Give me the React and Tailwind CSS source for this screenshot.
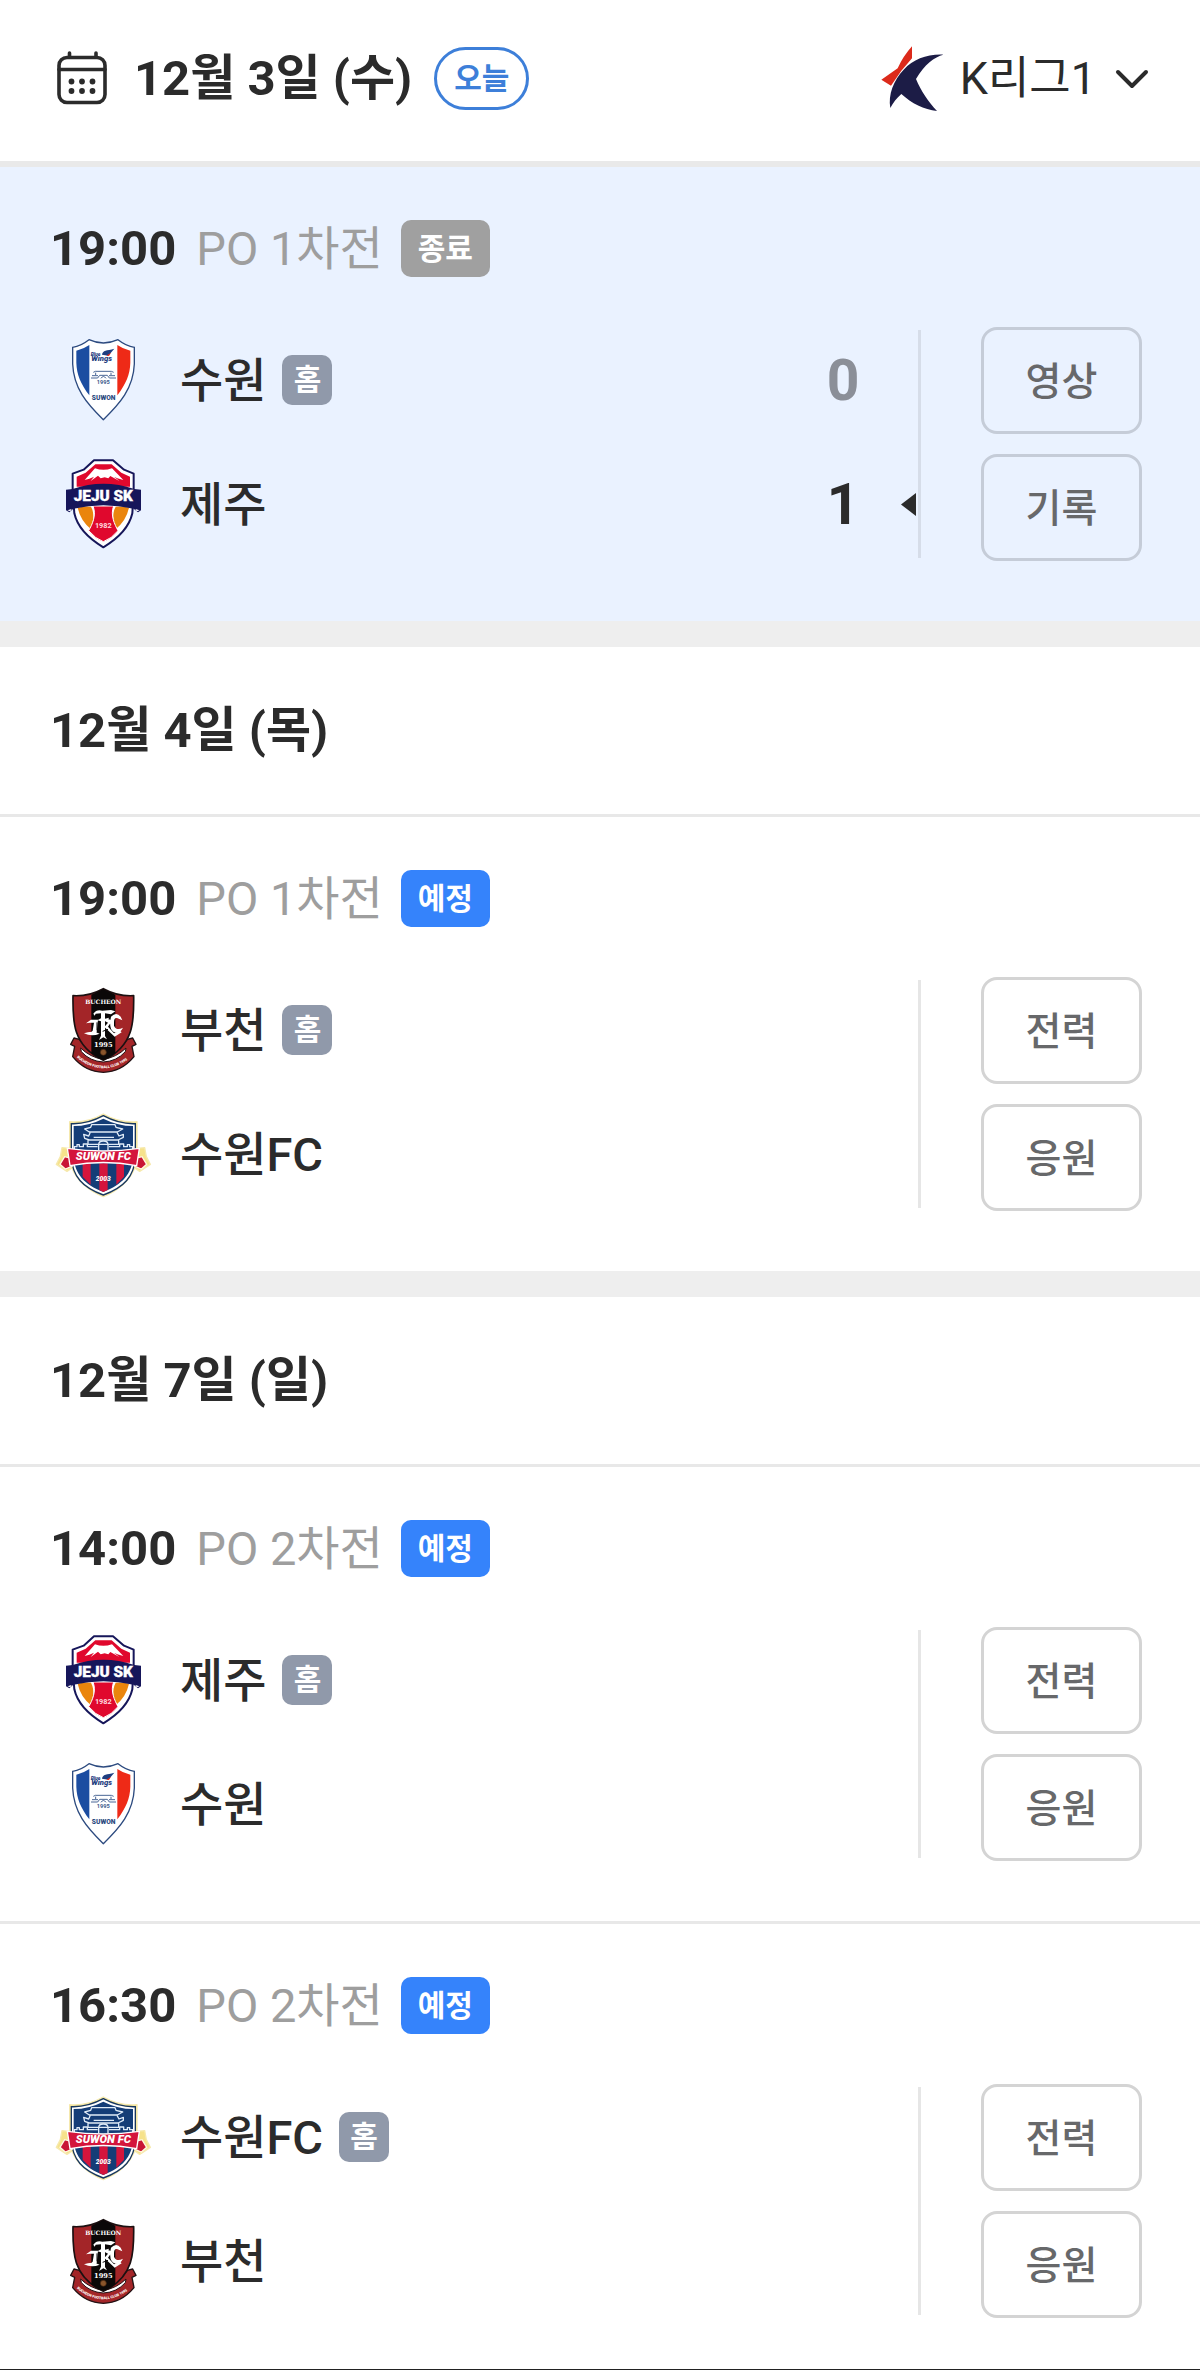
import { useState } from "react";

function CalendarIcon() {
    return (
        <svg width="52" height="56" viewBox="0 0 52 56" fill="none" stroke="#2b2b2b" strokeWidth="3.6" strokeLinecap="round" aria-hidden="true">
            <rect x="3" y="6.5" width="46" height="45" rx="8" />
            <path d="M3 18.5H49M13.5 2V6M40 2V6" />
            <g fill="#2b2b2b" stroke="none">
                <circle cx="15.5" cy="30.5" r="2.9" />
                <circle cx="26" cy="30.5" r="2.9" />
                <circle cx="36.5" cy="30.5" r="2.9" />
                <circle cx="15.5" cy="40" r="2.9" />
                <circle cx="26" cy="40" r="2.9" />
                <circle cx="36.5" cy="40" r="2.9" />
            </g>
        </svg>
    );
}

function LeagueLogo() {
    return (
        <svg width="63" height="68" viewBox="254 130 189 204" aria-hidden="true">
            <path d="M347 134V170L315 207L284 252L255 234L304 200Q320 164 347 134Z" fill="#dc2a1b" />
            <path d="M441 159C415 166 384 188 359 232C374 268 396 300 422 328C383 324 346 305 315 277C301 290 290 303 282 319C275 279 292 235 322 204C352 173 392 157 441 159Z" fill="#1c1c46" />
        </svg>
    );
}

function SuwonLogo() {
    return (
        <svg className="size-24" viewBox="45 36 288 288" aria-hidden="true">
            <path d="M98 82C117 79 133 70 147 59Q190 79 234 59C248 70 264 79 283 82V132C280 205 240 250 190 299C140 250 101 205 98 132Z" fill="#fff" stroke="#2c4a7f" strokeWidth="4" />
            <path d="M109 92Q131 87 148 75V226C122 191 110 164 109 128Z" fill="#1c4da1" />
            <path d="M271 92Q249 87 232 75V226C258 191 270 164 271 128Z" fill="#ee2a17" />
            <path d="M186 104C188 90 200 92 223 86L205 107Z" fill="#1f3e80" />
            <path d="M199 107L213 98L207 108Z" fill="#ee2a17" />
            <text x="152" y="107" fontSize="15" className="font-[Roboto] font-black italic" fill="#1f3e80">Blue</text>
            <text x="154" y="123" fontSize="23" className="font-[Roboto] font-black italic" fill="#1f3e80">Wings</text>
            <path d="M160 157L166 154H214L221 157M167 158V165M213 158V165M153 174H173L179 166H202L208 174H228M156 167H174M207 167H225M183 175Q190 164 198 175" fill="none" stroke="#4a6796" strokeWidth="3" />
            <text x="190" y="192" fontSize="17" textAnchor="middle" className="font-[Roboto] font-bold" fill="#3d5a8c">1995</text>
            <text x="191" y="239" fontSize="20" textAnchor="middle" className="font-[Roboto] font-black" fill="#2b4a80">SUWON</text>
        </svg>
    );
}

function JejuLogo() {
    return (
        <svg className="size-24" viewBox="45 408 288 288" aria-hidden="true">
            <path d="M162 421H219L252 449L281 461V515L277 580C267 625 235 655 190 682C145 655 113 625 103 580L98 515V461L131 449Z" fill="#fff" stroke="#16165a" strokeWidth="6" strokeLinejoin="round" />
            <path d="M166 433H215L244 458L270 470V500H110V470L137 458Z" fill="#e0082d" />
            <path d="M134 480L165 445Q190 454 216 445L250 480L232 475L222 470L238 483L211 468L205 475L194 472L182 475L174 467L152 483L162 470L148 476Z" fill="#fff" />
            <path d="M113 563Q134 558 153 560C166 584 158 608 153 628Q121 601 113 563Z" fill="#ea850d" />
            <path d="M267 563Q246 558 227 560C214 584 222 608 227 628Q259 601 267 563Z" fill="#ea850d" />
            <path d="M159 558H221C210 585 224 613 234 632Q215 656 190 665Q166 656 146 632C157 613 170 585 159 558Z" fill="#e0082d" stroke="#fff" strokeWidth="3" />
            <path d="M78 509L98 507Q190 475 283 507L303 509V571L294 577L281 566Q190 545 100 566L88 577L78 571Z" fill="#16165a" />
            <path d="M82 571L95 567L91 574ZM299 571L286 567L290 574Z" fill="#fff" />
            <text x="190" y="543" fontSize="46" textAnchor="middle" className="font-[Roboto] font-black" fill="#fff" stroke="#fff" strokeWidth="1">JEJU SK</text>
            <text x="190" y="623" fontSize="22" textAnchor="middle" className="font-[Roboto] font-bold" fill="#ffd9df">1982</text>
        </svg>
    );
}

function BucheonLogo() {
    return (
        <svg className="size-24" viewBox="45 36 288 288" aria-hidden="true">
            <path d="M102 204L92 223L104 229L98 260Q136 306 190 307Q244 306 282 260L276 229L288 223L278 204L262 208Q190 300 118 208Z" fill="#a32528" stroke="#231214" strokeWidth="4" strokeLinejoin="round" />
            <path d="M122 234Q150 262 190 268Q230 262 258 234L256 245Q230 274 190 276Q150 274 124 245Z" fill="#fff" stroke="#231214" strokeWidth="3" />
            <path d="M190 56Q235 80 281 77C282 150 284 228 190 271C96 228 98 150 99 77Q145 80 190 56Z" fill="#a32528" stroke="#1b1011" strokeWidth="5" strokeLinejoin="round" />
            <path d="M154 74L190 57L226 74V250Q210 263 190 270Q170 263 154 250Z" fill="#0b0808" />
            <text x="190" y="103" fontSize="18" textAnchor="middle" className="font-['DejaVu_Serif'] font-bold" fill="#fff">BUCHEON</text>
            <g fill="#fff">
                <path d="M160 131Q170 117 187 122L213 120L226 124L213 133L195 130V146L207 143L203 153H195V198L201 208L190 202L177 210L183 197V154L172 151L183 145V130L167 131L164 137Z" />
                <path d="M138 160L153 149H174L170 187Q156 196 134 190Q153 188 158 182L162 158H149ZM193 152Q209 143 215 154L204 170L222 190L240 182L245 187L224 200L193 171L204 158ZM213 140Q229 124 242 140L247 151L231 144Q222 142 222 157V167Q229 184 249 173Q238 195 220 185Q208 176 211 152ZM132 190Q157 180 179 191Q155 201 132 190Z" />
            </g>
            <path d="M171 157V181M204 178L188 184" stroke="#0b0808" strokeWidth="3" />
            <text x="190" y="231" fontSize="20" textAnchor="middle" className="font-['DejaVu_Serif'] font-bold" fill="#fff">1995</text>
            <circle cx="190" cy="247" r="9" fill="#8a552b" stroke="#40230f" strokeWidth="2" />
            <path id="bucheon-ribbon" d="M110 262Q145 293 190 295Q235 293 272 262" fill="none" />
            <text fontSize="11" className="font-[Roboto] font-black" fill="#fff">
                <textPath href="#bucheon-ribbon">BUCHEON FOOTBALL CLUB 1995</textPath>
            </text>
        </svg>
    );
}

function SuwonFcLogo() {
    return (
        <svg className="size-24" viewBox="45 408 288 288" aria-hidden="true">
            <path d="M190 432Q240 460 291 455V535L314 533L319 560L331 583L299 604L284 594Q262 650 190 680Q118 650 96 594L81 604L49 583L61 560L66 533L89 535V455Q140 460 190 432Z" fill="#f6e28b" stroke="#f6e9ad" strokeWidth="4" strokeLinejoin="round" />
            <path d="M190 437Q238 463 286 461V560C283 620 252 652 190 675C128 652 97 620 94 560V461Q142 463 190 437Z" fill="#fff" stroke="#17375f" strokeWidth="4" />
            <path d="M190 446Q234 468 279 468V560C276 612 247 643 190 666C133 643 104 612 101 560V468Q146 468 190 446Z" fill="#143d77" />
            <path d="M128 580H152V644L128 620ZM178 580H203V660L190 666L178 660ZM229 580H252V620L229 644Z" fill="#d4153c" />
            <g fill="none" stroke="#dfebf7" strokeWidth="4" strokeLinejoin="round">
                <path d="M155 464H225L228 472L248 477L232 486H148L134 477L152 472Z" />
                <path d="M151 487L146 498L131 493L134 505L148 510H234L250 502V493L237 498L231 487M161 502H222M144 511V523H236V511" />
                <path d="M103 541V530H111V524H118V530H130V522H142V530H173M207 530H239V522H251V530H262V524H269V530H278V541M176 540V524Q176 513 190 513Q204 513 204 524V540" />
            </g>
            <path d="M60 583L74 560L94 565L97 588L76 597ZM320 583L306 560L286 565L283 588L304 597Z" fill="#c91534" stroke="#fff8e2" strokeWidth="4" />
            <path d="M82 535Q190 551 298 535L290 587Q190 568 90 587Z" fill="#d4153c" stroke="#fff" strokeWidth="4" />
            <text x="190" y="570" fontSize="34" textAnchor="middle" className="font-[Roboto] font-black italic" fill="#fff">SUWON FC</text>
            <text x="190" y="634" fontSize="20" textAnchor="middle" className="font-[Roboto] font-black italic" fill="#fff">2003</text>
        </svg>
    );
}

const TEAMS = {
    suwon: { name: "수원", Logo: SuwonLogo },
    jeju: { name: "제주", Logo: JejuLogo },
    bucheon: { name: "부천", Logo: BucheonLogo },
    suwonFc: { name: "수원FC", Logo: SuwonFcLogo },
};

const days = [
    {
        date: "12월 3일 (수)",
        matches: [
            { time: "19:00", round: "PO 1차전", done: true, home: "suwon", away: "jeju", score: [0, 1] },
        ],
    },
    {
        date: "12월 4일 (목)",
        matches: [{ time: "19:00", round: "PO 1차전", home: "bucheon", away: "suwonFc" }],
    },
    {
        date: "12월 7일 (일)",
        matches: [
            { time: "14:00", round: "PO 2차전", home: "jeju", away: "suwon" },
            { time: "16:30", round: "PO 2차전", home: "suwonFc", away: "bucheon", last: true },
        ],
    },
];

function TeamRow({ team, isHome, score, winner }) {
    const { name, Logo } = TEAMS[team];

    return (
        <li className="flex h-[124px] items-center">
            <Logo />
            <span className="ml-[29px] text-[47px] leading-none font-medium">{name}</span>
            {isHome && (
                <span className="ml-4 flex size-[50px] items-center justify-center rounded-[10px] bg-[#9099aa] text-[30px] leading-none font-bold text-white">
                    홈
                </span>
            )}
            {score !== undefined && (
                <span className={`ml-auto w-[76px] text-center text-[57px] leading-none font-bold ${winner ? "" : "text-[#8b8f98]"}`}>
                    {score}
                </span>
            )}
            {score !== undefined && (
                <span className="flex w-[37px] justify-end pr-0.5">
                    {winner && (
                        <svg width="15" height="23" viewBox="0 0 15 23" aria-label="승리">
                            <path d="M15 0V23L0 11.5Z" fill="#2b2b2b" />
                        </svg>
                    )}
                </span>
            )}
        </li>
    );
}

function Match({ match }) {
    const { time, round, done, home, away, score, last } = match;
    const actions = done ? ["영상", "기록"] : ["전력", "응원"];

    return (
        <article className={`pt-[53px] pr-[58px] pl-[50px] ${last ? "pb-[46px]" : "pb-[55px]"} ${done ? "bg-[#eaf2ff]" : ""}`}>
            <div className="flex h-[57px] items-center">
                <time className="text-[49px] leading-none font-bold">{time}</time>
                <span className="ml-5 text-[47px] leading-none text-[#9e9e9e]">{round}</span>
                <span className={`ml-[18px] flex h-full w-[89px] items-center justify-center rounded-[10px] text-[30px] leading-none font-bold text-white ${done ? "bg-[#a0a0a0]" : "bg-[#3583fb]"}`}>
                    {done ? "종료" : "예정"}
                </span>
            </div>

            <div className="mt-[41px] flex items-center">
                <ul className="flex-1 pl-[5px]">
                    <TeamRow team={home} isHome score={score?.[0]} winner={score && score[0] > score[1]} />
                    <TeamRow team={away} score={score?.[1]} winner={score && score[1] > score[0]} />
                </ul>
                <div className="flex items-center gap-15 pt-1">
                    <div className={`h-[228px] w-[3px] ${done ? "bg-[#d6dde9]" : "bg-[#e6e6e6]"}`} />
                    <div className="flex flex-col gap-5">
                        {actions.map((label) => (
                            <button
                                key={label}
                                type="button"
                                className={`h-[107px] w-[161px] rounded-2xl border-3 pt-1 text-[39px] leading-none font-medium text-[#67686a] ${done ? "border-[#c5ccd8]" : "border-[#d4d4d4]"}`}
                            >
                                {label}
                            </button>
                        ))}
                    </div>
                </div>
            </div>
        </article>
    );
}

function App() {
    const [today, ...upcoming] = days;
    const [league] = useState("K리그1");

    return (
        <main className="border-b border-[#222222] bg-white font-[Roboto,'Noto_Sans_CJK_KR',sans-serif] text-[#2b2b2b]">
            {/* HEADER */}
            <header className="flex h-[167px] items-center border-b-6 border-[#e9e9e9] pr-[50px] pb-1 pl-[56px]">
                <button type="button" aria-label="날짜 선택">
                    <CalendarIcon />
                </button>
                <h1 className="ml-[26px] text-[49px] leading-none font-bold">{today.date}</h1>
                <button type="button" className="ml-[22px] h-[63px] w-[95px] rounded-full border-3 border-[#3d7fd9] text-[30px] leading-none font-bold text-[#3d7fd9]">
                    오늘
                </button>
                <button type="button" className="ml-auto flex items-center">
                    <LeagueLogo />
                    <span className="ml-4 text-[45px] leading-none">{league}</span>
                    <svg className="ml-[18px]" width="36" height="24" viewBox="0 0 36 24" fill="none" stroke="#2b2b2b" strokeWidth="4" strokeLinecap="round" strokeLinejoin="round" aria-hidden="true">
                        <path d="M4 5L18 19L32 5" />
                    </svg>
                </button>
            </header>

            {today.matches.map((match) => (
                <Match key={match.time} match={match} />
            ))}

            {/* UPCOMING DAYS */}
            {upcoming.map((day) => (
                <section key={day.date} className="border-t-26 border-[#eeeeee]">
                    <h2 className="flex h-[167px] items-center pl-[50px] text-[49px] leading-none font-bold">{day.date}</h2>
                    {day.matches.map((match) => (
                        <div key={match.time} className="border-t-3 border-[#e8e8e8]">
                            <Match match={match} />
                        </div>
                    ))}
                </section>
            ))}
        </main>
    );
}

export default App;
